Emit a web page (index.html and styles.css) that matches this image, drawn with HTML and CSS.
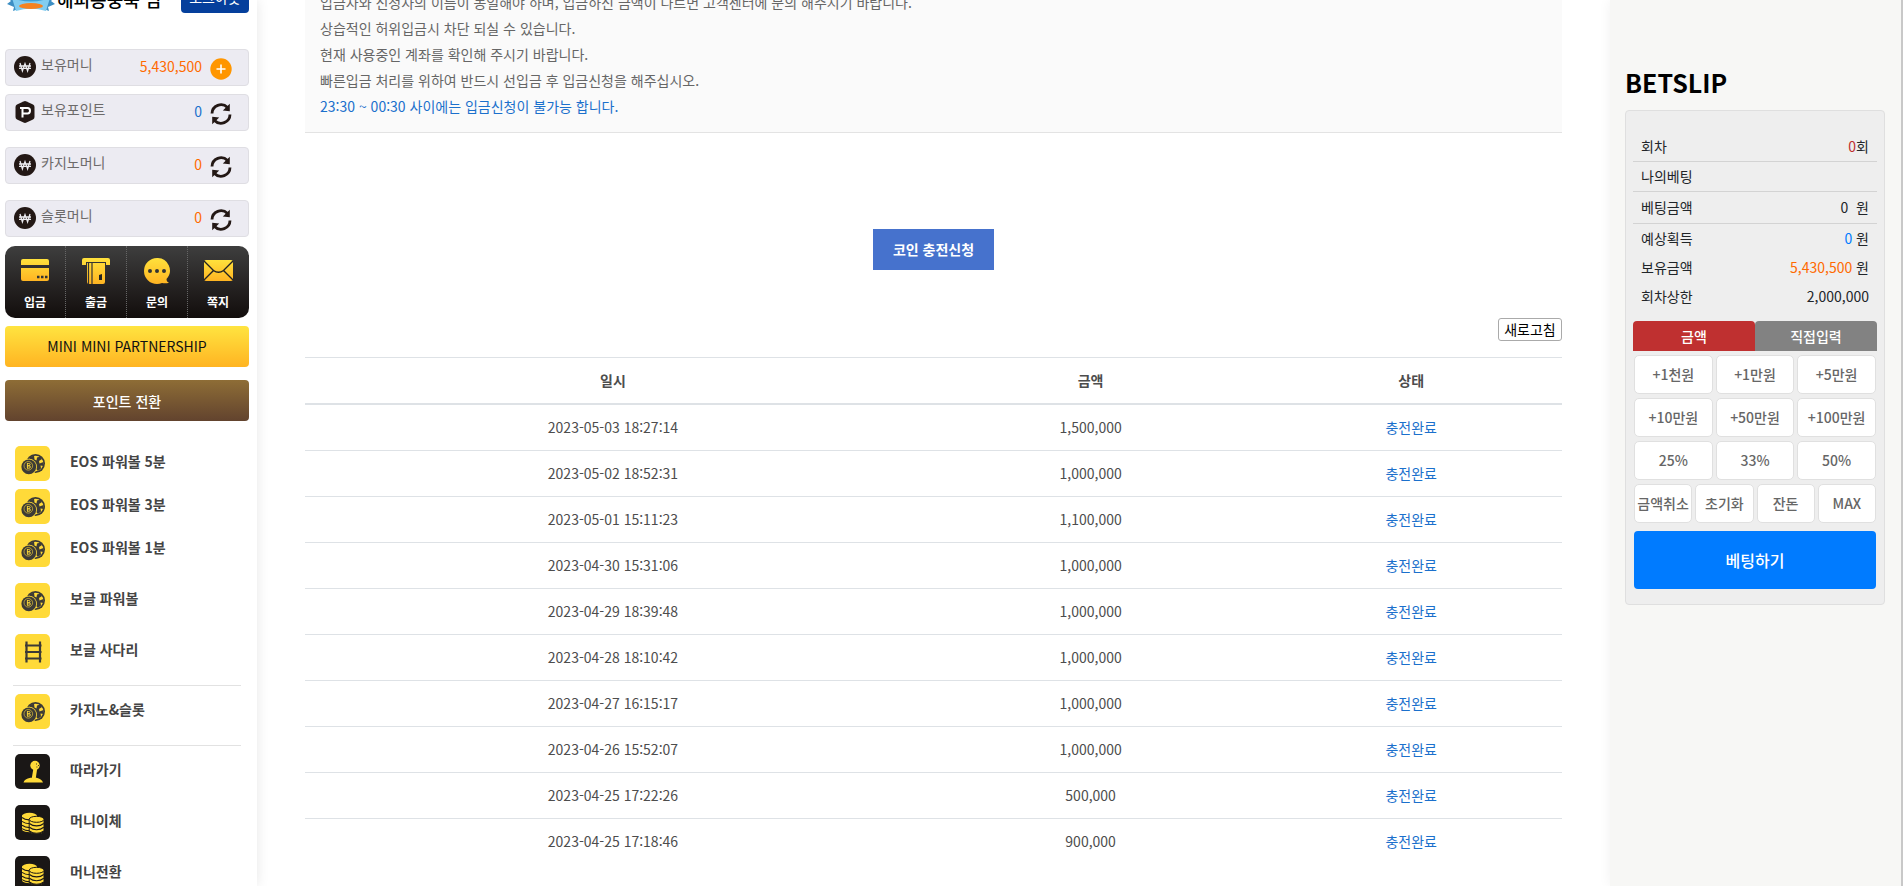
FILE: index.html
```html
<!DOCTYPE html>
<html lang="ko">
<head>
  <meta charset="UTF-8">
  <meta name="viewport" content="width=device-width, initial-scale=1.0">
  <title>코인 충전신청</title>
  <link rel="stylesheet" href="styles.css">
</head>
<body>
  <!-- shared icons -->
  <svg class="defs" width="0" height="0" aria-hidden="true">
    <defs>
      <linearGradient id="gold" x1="0" y1="0" x2="0" y2="1">
        <stop offset="0" stop-color="#ffe13c"/>
        <stop offset="1" stop-color="#ffb422"/>
      </linearGradient>
    </defs>
    <symbol id="i-won" viewBox="0 0 22 22">
      <circle cx="11" cy="11" r="11" fill="#231815"/>
      <path d="M6 7l2.400 8L11 7.600l2.600 7.400L16 7M5 10h12M5 12.400h12" fill="none" stroke="#ecebf0" stroke-width="1.300"/>
    </symbol>
    <symbol id="i-point" viewBox="0 0 22 22">
      <path d="M9.500.4q1.500-.7 3 0l6.500 3.200q1.500.8 1.500 2.400v10q0 1.600-1.500 2.400l-6.500 3.200q-1.500.7-3 0L3 18.400Q1.500 17.600 1.500 16V6Q1.500 4.400 3 3.600z" fill="#231815"/>
      <path d="M8.500 16.500V7h5q2.500 0 2.500 2.700t-2.500 2.700h-5M6 7h3" fill="none" stroke="#fff" stroke-width="2"/>
    </symbol>
    <symbol id="i-plus" viewBox="0 0 22 22">
      <circle cx="11" cy="11" r="10.700" fill="#ff9600"/>
      <path d="M11 6.500v9M6.500 11h9" stroke="#fff" stroke-width="1.600"/>
    </symbol>
    <symbol id="i-sync" viewBox="0 0 22 22">
      <path d="M2 10.500A9 9 0 0 1 17.500 4.500M20 11.500A9 9 0 0 1 4.500 17.500" fill="none" stroke="#231815" stroke-width="2.800"/>
      <path d="M19.800.8v7.400l-7-.6zM2.200 21.200v-7.400l7 .6z" fill="#231815"/>
    </symbol>
    <symbol id="i-ball" viewBox="0 0 24 24">
      <circle cx="14.500" cy="11.500" r="9.500" fill="#3c3a36"/>
      <circle cx="14.500" cy="11.500" r="7.800" fill="#ffda39"/>
      <path d="M8 5.500l5-2 .5 4 2 1 .5-3 3.500-1 1.500 2.500-3 2 .5 2.500 4-1.500v4l-3-.5.500 3-3 2.500-2-2-2 1.500v-4l2-1.500-1.500-3.500-4-1.500z" fill="#3c3a36"/>
      <circle cx="8" cy="14.800" r="8" fill="#ffda39"/>
      <circle cx="7.800" cy="14.800" r="7.400" fill="#3c3a36"/>
      <circle cx="7.300" cy="13.800" r="4.300" fill="none" stroke="#ffda39" stroke-width=".6"/>
      <path d="M6 11.500h1.700q1.400 0 1.400 1.100t-1.400 1.200H6.200h1.700q1.500 0 1.500 1.200t-1.500 1.200H6M6.400 11.500v4.700" fill="none" stroke="#ffda39" stroke-width=".9"/>
    </symbol>
    <symbol id="i-ladder" viewBox="0 0 24 24">
      <path d="M5.500 1.500v21M19 1.500v21" stroke="#3c3a36" stroke-width="2.200"/>
      <path d="M4 5.500h16.500M4 12h16.500M4 18.500h16.500" stroke="#3c3a36" stroke-width="1.800"/>
    </symbol>
    <symbol id="i-stick" viewBox="0 0 24 24">
      <circle cx="14" cy="5.500" r="4.700" fill="#ffda39"/>
      <path d="M12.500 8h3.800l-1.500 10h-4zM2.500 22.500q1-3.500 7-4.700h6q5 1.200 6.500 4.700z" fill="#ffda39"/>
      <path d="M15 4h.9M17 5.500h.9M15.500 7h.9" stroke="#1a1716" stroke-width=".9"/>
    </symbol>
    <symbol id="i-coins" viewBox="0 0 24 24">
      <path d="M1 4.500v14.500q2.500 2.200 8 2.200h1V4z" fill="#ffda39"/>
      <ellipse cx="8.500" cy="4.700" rx="7.500" ry="2.900" fill="#ffda39"/>
      <path d="M1 6.500q3 2.600 8 2.300M1 10.400q3 2.300 8 2.300M1 14.300q3 2.300 8 2.300M1 17.600q3 2.200 8 2.300" fill="none" stroke="#1a1716" stroke-width="1.100"/>
      <path d="M8.200 8v12.500q2 2.500 7.500 2.500t7.300-2.500V8z" fill="#ffda39" stroke="#1a1716"/>
      <ellipse cx="15.600" cy="8.300" rx="7.400" ry="3" fill="#ffda39" stroke="#1a1716"/>
      <path d="M8.400 12.500q3 2.400 7.200 2.400t7.200-2.400M8.400 16.300q3 2.400 7.200 2.400t7.200-2.400M8.400 20q3 2.300 7.200 2.300t7.200-2.300" fill="none" stroke="#1a1716" stroke-width="1.100"/>
    </symbol>
  </svg>

  <div class="page">
    <aside class="sidebar">
      <div class="user">
        <svg class="badge" viewBox="0 0 48 40" aria-hidden="true">
          <path d="M0 23l12 1 2 10-8 3 1-4-7-3 4-3zM48 23l-12 1-2 10 8 3-1-4 7-3-4-3z" fill="#3d8fc4"/>
          <path d="M8 8L24 0l16 8v20q-16 6-32 0z" fill="#3d9fd6"/>
          <path d="M5 24q19 7 38 0l-4 13q-15-5-30 0z" fill="#82cdf0"/>
          <ellipse cx="24" cy="32" rx="12" ry="3" fill="#f58220"/>
        </svg>
        <strong class="user-name">해피몽둥뚝 님</strong>
        <button class="logout" type="button">로그아웃</button>
      </div>

      <ul class="wallet">
        <li><svg><use href="#i-won"/></svg><span>보유머니</span><b>5,430,500</b><button type="button" aria-label="충전"><svg><use href="#i-plus"/></svg></button></li>
        <li><svg><use href="#i-point"/></svg><span>보유포인트</span><b class="blue">0</b><button type="button" aria-label="새로고침"><svg><use href="#i-sync"/></svg></button></li>
        <li class="apart"><svg><use href="#i-won"/></svg><span>카지노머니</span><b>0</b><button type="button" aria-label="새로고침"><svg><use href="#i-sync"/></svg></button></li>
        <li class="apart"><svg><use href="#i-won"/></svg><span>슬롯머니</span><b>0</b><button type="button" aria-label="새로고침"><svg><use href="#i-sync"/></svg></button></li>
      </ul>

      <nav class="quick">
        <a href="#">
          <svg viewBox="0 0 30 26"><path d="M1 3q0-2 2-2h24q2 0 2 2v4H1zM1 10h28v11q0 2-2 2H3q-2 0-2-2z" fill="url(#gold)"/><path d="M17 19h2.500M21 19h2.500M25 19h2.500" stroke="#333" stroke-width="2.500"/></svg>
          입금
        </a>
        <a href="#">
          <svg viewBox="0 0 30 26"><path d="M3 0h24q2 0 2 2v5h-4V4H5v3H1V2q0-2 2-2zM6 5h18v19q0 2-2 2H8q-2 0-2-2z" fill="url(#gold)"/><path d="M5 4.500h20M7.500 5v21M11 5v21" stroke="#333" stroke-width="1.200"/><path d="M18 17l3-1v6h-3z" fill="#222"/></svg>
          출금
        </a>
        <a href="#">
          <svg viewBox="0 0 30 26"><path d="M15 0a12.500 12.500 0 0 1 9.500 21q0 3 2.500 3.500-3 1.500-7 .4Q17.500 26 15 26A13 13 0 0 1 15 0z" fill="url(#gold)"/><path d="M6 13a2 2 0 1 0 4 0 2 2 0 1 0-4 0M13 13a2 2 0 1 0 4 0 2 2 0 1 0-4 0M20 13a2 2 0 1 0 4 0 2 2 0 1 0-4 0" fill="#333"/></svg>
          문의
        </a>
        <a href="#">
          <svg viewBox="0 0 30 26"><rect x="1" y="2" width="29" height="21" rx="2" fill="url(#gold)"/><path d="M1 3l9.500 9.500q5 3.500 10 0L30 3M1 22l9.500-9.500M30 22l-9.500-9.500" fill="none" stroke="#222" stroke-width="1.400"/></svg>
          쪽지
        </a>
      </nav>

      <a class="bar gold" href="#">MINI MINI PARTNERSHIP</a>
      <a class="bar brown" href="#">포인트 전환</a>

      <nav class="menu">
        <a class="tight" href="#"><i><svg><use href="#i-ball"/></svg></i>EOS 파워볼 5분</a>
        <a class="tight" href="#"><i><svg><use href="#i-ball"/></svg></i>EOS 파워볼 3분</a>
        <a href="#"><i><svg><use href="#i-ball"/></svg></i>EOS 파워볼 1분</a>
        <a href="#"><i><svg><use href="#i-ball"/></svg></i>보글 파워볼</a>
        <a href="#"><i><svg><use href="#i-ladder"/></svg></i>보글 사다리</a>
        <hr>
        <a href="#"><i><svg><use href="#i-ball"/></svg></i>카지노&amp;슬롯</a>
        <hr>
        <a class="dark" href="#"><i><svg><use href="#i-stick"/></svg></i>따라가기</a>
        <a class="dark" href="#"><i><svg><use href="#i-coins"/></svg></i>머니이체</a>
        <a class="dark" href="#"><i><svg><use href="#i-coins"/></svg></i>머니전환</a>
      </nav>
    </aside>

    <main class="content">
      <div class="notice">
        <p>입금자와 신청자의 이름이 동일해야 하며, 입금하신 금액이 다르면 고객센터에 문의 해주시기 바랍니다.</p>
        <p>상습적인 허위입금시 차단 되실 수 있습니다.</p>
        <p>현재 사용중인 계좌를 확인해 주시기 바랍니다.</p>
        <p>빠른입금 처리를 위하여 반드시 선입금 후 입금신청을 해주십시오.</p>
        <p class="blue">23:30 ~ 00:30 사이에는 입금신청이 불가능 합니다.</p>
      </div>

      <button class="charge" type="button">코인 충전신청</button>
      <button class="refresh" type="button">새로고침</button>

      <table class="history">
        <thead>
          <tr><th class="col-date">일시</th><th class="col-amount">금액</th><th>상태</th></tr>
        </thead>
        <tbody>
          <tr><td>2023-05-03 18:27:14</td><td>1,500,000</td><td class="blue">충전완료</td></tr>
          <tr><td>2023-05-02 18:52:31</td><td>1,000,000</td><td class="blue">충전완료</td></tr>
          <tr><td>2023-05-01 15:11:23</td><td>1,100,000</td><td class="blue">충전완료</td></tr>
          <tr><td>2023-04-30 15:31:06</td><td>1,000,000</td><td class="blue">충전완료</td></tr>
          <tr><td>2023-04-29 18:39:48</td><td>1,000,000</td><td class="blue">충전완료</td></tr>
          <tr><td>2023-04-28 18:10:42</td><td>1,000,000</td><td class="blue">충전완료</td></tr>
          <tr><td>2023-04-27 16:15:17</td><td>1,000,000</td><td class="blue">충전완료</td></tr>
          <tr><td>2023-04-26 15:52:07</td><td>1,000,000</td><td class="blue">충전완료</td></tr>
          <tr><td>2023-04-25 17:22:26</td><td>500,000</td><td class="blue">충전완료</td></tr>
          <tr><td>2023-04-25 17:18:46</td><td>900,000</td><td class="blue">충전완료</td></tr>
        </tbody>
      </table>
    </main>

    <aside class="betslip">
      <h2>BETSLIP</h2>
      <div class="slip">
        <dl>
          <div class="line"><dt>회차</dt><dd><span class="red">0</span>회</dd></div>
          <div class="line"><dt>나의베팅</dt><dd></dd></div>
          <div class="line tall"><dt>베팅금액</dt><dd>0 &nbsp;원</dd></div>
          <div><dt>예상획득</dt><dd><span class="sky">0</span> 원</dd></div>
          <div><dt>보유금액</dt><dd><span class="orange">5,430,500</span> 원</dd></div>
          <div><dt>회차상한</dt><dd>2,000,000</dd></div>
        </dl>
        <div class="tabs">
          <button class="on" type="button">금액</button>
          <button type="button">직접입력</button>
        </div>
        <div class="amounts">
          <button type="button">+1천원</button>
          <button type="button">+1만원</button>
          <button type="button">+5만원</button>
          <button type="button">+10만원</button>
          <button type="button">+50만원</button>
          <button type="button">+100만원</button>
          <button type="button">25%</button>
          <button type="button">33%</button>
          <button type="button">50%</button>
        </div>
        <div class="amounts four">
          <button type="button">금액취소</button>
          <button type="button">초기화</button>
          <button type="button">잔돈</button>
          <button type="button">MAX</button>
        </div>
        <button class="bet" type="button">베팅하기</button>
      </div>
    </aside>
  </div>
</body>
</html>
```
FILE: styles.css
```css
* {
  box-sizing: border-box;
}
html, body {
  margin: 0;
  height: 100%;
  overflow: hidden;
}
body {
  font-family: "Noto Sans CJK KR", "Noto Sans", sans-serif;
  font-size: 14px;
  line-height: 21px;
  color: #212529;
  background: #fff;
}
ul, dl, dd, h2, p {
  margin: 0;
  padding: 0;
}
ul {
  list-style: none;
}
a {
  color: inherit;
  text-decoration: none;
}
button {
  font: inherit;
  padding: 0;
  border: 0;
  background: none;
  cursor: pointer;
}
.defs {
  position: absolute;
}
.page {
  display: flex;
  height: 100%;
}
.blue { color: #1b70cc; }
.red { color: #c02f2f; }
.sky { color: #007bff; }
.orange { color: #ff6a00; }

/* left */
.sidebar {
  width: 257px;
  flex-shrink: 0;
  padding: 0 8px 0 5px;
  background: #fff;
  box-shadow: 0 0 12px rgba(0, 0, 0, 0.1);
}
.user {
  display: flex;
  align-items: flex-end;
  height: 40px;
  margin-top: -26px;
}
.badge {
  width: 48px;
  height: 40px;
  margin-left: 2px;
}
.user-name {
  margin-left: 2px;
  font-size: 18px;
  font-weight: 500;
  line-height: 30px;
  color: #000;
}
.logout {
  width: 68px;
  height: 32px;
  margin: 0 0 1px auto;
  border-radius: 4px;
  color: #fff;
  background: #053f9c;
}
.wallet {
  padding-top: 35px;
}
.wallet li {
  display: flex;
  align-items: center;
  height: 37px;
  margin-bottom: 8px;
  padding: 0 16px 2px 8px;
  border: 1px solid #dfdee3;
  border-radius: 4px;
  background: #ecebf2;
}
.wallet .apart {
  margin-top: 16px;
}
.wallet svg {
  display: block;
  width: 22px;
  height: 22px;
}
.wallet span {
  margin-left: 5px;
  padding-bottom: 4px;
  color: #6c6a6a;
}
.wallet b {
  margin-left: auto;
  font-weight: 400;
  color: #ff6a00;
}
.wallet b.blue {
  color: #1b70cc;
}
.wallet button {
  margin: 4px 0 0 8px;
}
.quick {
  display: flex;
  height: 72px;
  margin-top: 9px;
  border-radius: 10px;
  background: linear-gradient(#3e3e3e, #120d0c);
}
.quick a {
  flex: 1;
  display: flex;
  flex-direction: column;
  align-items: center;
  gap: 7px;
  padding-top: 12px;
  border-right: 1px dotted #666;
  font-size: 12px;
  font-weight: 700;
  color: #fff;
}
.quick a:last-child {
  border-right-color: transparent;
}
.quick svg {
  width: 30px;
  height: 26px;
}
.bar {
  display: block;
  height: 41px;
  margin-top: 8px;
  border-radius: 4px;
  line-height: 41px;
  text-align: center;
}
.gold {
  color: #111;
  background: linear-gradient(#ffe440, #ffb422);
}
.brown {
  margin-top: 13px;
  padding-top: 1px;
  font-weight: 500;
  color: #fff;
  background: linear-gradient(#8e6d36, #62432e);
}
.menu {
  padding: 25px 8px 0;
}
.menu a {
  display: flex;
  gap: 20px;
  margin: 0 2px 16px;
  line-height: 30px;
  font-weight: 700;
  color: #444;
}
.menu .tight {
  margin-bottom: 8px;
}
.menu i {
  display: flex;
  align-items: center;
  justify-content: center;
  width: 35px;
  height: 35px;
  border-radius: 5px;
  background: #ffda39;
}
.menu svg {
  width: 24px;
  height: 24px;
}
.menu .dark i {
  background: #1a1716;
}
.menu hr {
  margin: 0 0 8px;
  border: 0;
  border-top: 1px solid #e2e2e2;
}

/* center */
.content {
  flex: 1;
  display: flex;
  flex-direction: column;
  padding: 0 48px;
}
.notice {
  margin-top: -11px;
  padding: 0 15px 13px;
  border-bottom: 1px solid #e3e3e3;
  background: #fafafa;
  line-height: 26px;
  color: #666;
}
.notice .blue {
  color: #1b70cc;
}
.charge {
  align-self: center;
  width: 121px;
  height: 41px;
  margin-top: 96px;
  font-weight: 700;
  color: #fff;
  background: #4672cd;
}
.refresh {
  align-self: flex-end;
  width: 64px;
  height: 23px;
  margin: 48px 0 16px;
  border: 1px solid #aaa;
  border-radius: 3px;
  color: #000;
  background: #fff;
}
.history {
  width: 100%;
  border-collapse: collapse;
  text-align: center;
  color: #4d4d4d;
}
.history th, .history td {
  padding: 12px;
  border-top: 1px solid #dee2e6;
}
.history th {
  border-bottom: 2px solid #dee2e6;
  font-weight: 700;
}
.history td.blue {
  color: #1b70cc;
}
.col-date { width: 49%; }
.col-amount { width: 27%; }

/* right */
.betslip {
  width: 293px;
  flex-shrink: 0;
  padding: 64px 16px 0 15px;
  border-right: 2px solid #c8c8c8;
  background: #f7f7f5;
  box-shadow: 0 0 12px rgba(0, 0, 0, 0.06);
}
.betslip h2 {
  margin-bottom: 10px;
  font-size: 25px;
  line-height: 36px;
  font-weight: 700;
  color: #000;
}
.slip {
  padding: 21px 7px 15px;
  border: 1px solid #dfdfdf;
  border-radius: 4px;
  background: #eee;
}
.slip dl div {
  display: flex;
  justify-content: space-between;
  align-items: center;
  height: 29px;
  padding: 0 8px;
}
.slip dl .line {
  height: 30px;
  border-bottom: 1px solid #d3d3d3;
}
.slip dl .tall {
  height: 32px;
}
.tabs {
  display: flex;
  margin-top: 10px;
}
.tabs button {
  flex: 1;
  height: 30px;
  border-radius: 4px 4px 0 0;
  font-weight: 500;
  color: #fff;
  background: #828282;
}
.tabs .on {
  background: #bf3030;
}
.amounts {
  display: grid;
  grid-template-columns: repeat(3, 1fr);
  gap: 4px 3px;
  margin: 4px 1px 0;
}
.four {
  grid-template-columns: repeat(4, 1fr);
}
.amounts button {
  height: 39px;
  border: 1px solid #e0e0e0;
  border-radius: 5px;
  font-weight: 500;
  color: #666;
  background: #fff;
}
.bet {
  display: block;
  width: calc(100% - 2px);
  height: 58px;
  margin: 8px 1px 0;
  border-radius: 4px;
  font-size: 16px;
  font-weight: 500;
  color: #fff;
  background: #007bff;
}
```
